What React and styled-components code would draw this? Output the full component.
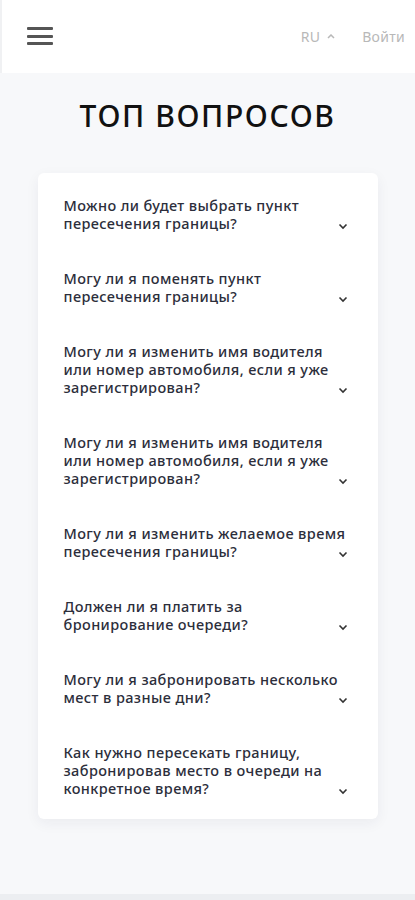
import React from 'react'
import styled, { createGlobalStyle } from 'styled-components'

const GlobalStyle = createGlobalStyle`
  * { box-sizing: border-box; }
  body {
    margin: 0;
    background: #f7f8fa;
    font-family: 'Noto Sans', 'Open Sans', sans-serif;
  }
`

const Header = styled.header`
  height: 73px;
  background: #fff;
  display: flex;
  align-items: center;
  justify-content: space-between;
  padding: 0 10px 0 25px;
  border-left: 2px solid #f0f1f3;
`

const Burger = styled.button`
  width: 26px;
  height: 18px;
  padding: 0;
  border: 0;
  background: none;
  display: flex;
  flex-direction: column;
  justify-content: space-between;
  margin-top: -1px;

  span {
    display: block;
    height: 3px;
    background: #555;
    border-radius: 1px;
  }
`

const Right = styled.div`
  display: flex;
  align-items: center;
  gap: 27px;
  color: #b8b8b8;
  font-size: 14px;
  letter-spacing: 0.3px;
`

const Lang = styled.div`
  display: flex;
  align-items: center;
  gap: 7px;
`

const Login = styled.a`
  color: #b8b8b8;
  text-decoration: none;
`

const Main = styled.main`
  padding: 25px 0 75px;
  border-bottom: 7px solid #eceef1;
`

const Title = styled.h1`
  margin: 0;
  text-align: center;
  font-family: 'Noto Sans', sans-serif;
  font-size: 30px;
  line-height: 36px;
  font-weight: 500;
  letter-spacing: 1.6px;
  color: #111;
`

const Card = styled.div`
  width: 340px;
  margin: 39px auto 0;
  background: #fff;
  border-radius: 6px;
  box-shadow: 0 4px 14px rgba(30, 40, 60, 0.06);
  padding: 23px 30px 22px 26px;
  display: flex;
  flex-direction: column;
  gap: 37px;
`

const Item = styled.div`
  position: relative;
`

const Question = styled.div`
  font-size: 14.5px;
  line-height: 18px;
  font-weight: 500;
  letter-spacing: 0.4px;
  color: #2c2e3b;
`

const Chevron = styled.svg`
  position: absolute;
  right: 0;
  bottom: 2px;
`

const questions = [
  'Можно ли будет выбрать пункт пересечения границы?',
  'Могу ли я поменять пункт пересечения границы?',
  'Могу ли я изменить имя водителя или номер автомобиля, если я уже зарегистрирован?',
  'Могу ли я изменить имя водителя или номер автомобиля, если я уже зарегистрирован?',
  'Могу ли я изменить желаемое время пересечения границы?',
  'Должен ли я платить за бронирование очереди?',
  'Могу ли я забронировать несколько мест в разные дни?',
  'Как нужно пересекать границу, забронировав место в очереди на конкретное время?',
]

const App = () => {
  return (
    <>
      <GlobalStyle />
      <Header>
        <Burger>
          <span />
          <span />
          <span />
        </Burger>
        <Right>
          <Lang>
            RU
            <svg width="8" height="5" viewBox="0 0 8 5">
              <path d="M1 4 L4 1 L7 4" fill="none" stroke="#b8b8b8" strokeWidth="1.5" />
            </svg>
          </Lang>
          <Login href="#">Войти</Login>
        </Right>
      </Header>
      <Main>
        <Title>ТОП ВОПРОСОВ</Title>
        <Card>
          {questions.map((q, i) => (
            <Item key={i}>
              <Question>{q}</Question>
              <Chevron width="10" height="7" viewBox="0 0 10 7">
                <path d="M1.5 1.5 L5 5 L8.5 1.5" fill="none" stroke="#333" strokeWidth="1.6" />
              </Chevron>
            </Item>
          ))}
        </Card>
      </Main>
    </>
  )
}

export default App
